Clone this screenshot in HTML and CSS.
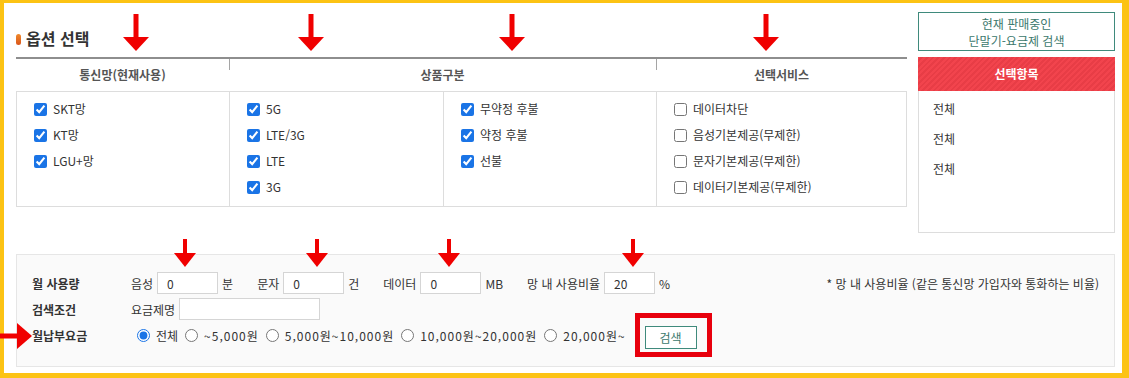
FILE: index.html
```html
<!DOCTYPE html>
<html lang="ko">
<head>
    <meta charset="UTF-8">
    <meta name="viewport" content="width=device-width, initial-scale=1.0">
    <title>옵션 선택</title>
    <link rel="stylesheet" href="styles.css">
</head>
<body>
    <div class="frame">
        <div class="top">
            <div class="options">
                <h2 class="title"><span class="dot"></span>옵션 선택</h2>
                <div class="opt-head">
                    <div class="hcell h1">통신망(현재사용)</div>
                    <div class="hcell h2">상품구분</div>
                    <div class="hcell h3">선택서비스</div>
                </div>
                <div class="opt-body">
                    <div class="col">
                        <label class="chk"><input type="checkbox" checked>SKT망</label>
                        <label class="chk"><input type="checkbox" checked>KT망</label>
                        <label class="chk"><input type="checkbox" checked>LGU+망</label>
                    </div>
                    <div class="col">
                        <label class="chk"><input type="checkbox" checked>5G</label>
                        <label class="chk"><input type="checkbox" checked>LTE/3G</label>
                        <label class="chk"><input type="checkbox" checked>LTE</label>
                        <label class="chk"><input type="checkbox" checked>3G</label>
                    </div>
                    <div class="col">
                        <label class="chk"><input type="checkbox" checked>무약정 후불</label>
                        <label class="chk"><input type="checkbox" checked>약정 후불</label>
                        <label class="chk"><input type="checkbox" checked>선불</label>
                    </div>
                    <div class="col">
                        <label class="chk"><input type="checkbox">데이터차단</label>
                        <label class="chk"><input type="checkbox">음성기본제공(무제한)</label>
                        <label class="chk"><input type="checkbox">문자기본제공(무제한)</label>
                        <label class="chk"><input type="checkbox">데이터기본제공(무제한)</label>
                    </div>
                </div>
            </div>
            <div class="side">
                <a class="side-btn" href="#">현재 판매중인<br>단말기-요금제 검색</a>
                <div class="side-head">선택항목</div>
                <ul class="side-list">
                    <li>전체</li>
                    <li>전체</li>
                    <li>전체</li>
                </ul>
            </div>
        </div>

        <div class="search">
            <div class="row">
                <span class="rlabel">월 사용량</span>
                <span class="fld">음성<input type="text" class="num" value="0">분</span>
                <span class="fld">문자<input type="text" class="num" value="0">건</span>
                <span class="fld">데이터<input type="text" class="num" value="0">MB</span>
                <span class="fld">망 내 사용비율<input type="text" class="num small" value="20">%</span>
                <span class="note">* 망 내 사용비율 (같은 통신망 가입자와 통화하는 비율)</span>
            </div>
            <div class="row">
                <span class="rlabel">검색조건</span>
                <span class="fld">요금제명<input type="text" class="name"></span>
            </div>
            <div class="row">
                <span class="rlabel">월납부요금</span>
                <label class="rad first"><input type="radio" name="fee" checked>전체</label>
                <label class="rad"><input type="radio" name="fee">~5,000원</label>
                <label class="rad"><input type="radio" name="fee">5,000원~10,000원</label>
                <label class="rad"><input type="radio" name="fee">10,000원~20,000원</label>
                <label class="rad"><input type="radio" name="fee">20,000원~</label>
                <span class="mark"><button class="btn-search">검색</button></span>
            </div>
        </div>

        <!-- annotation arrows -->
        <svg class="arrow a1" width="26" height="38" viewBox="0 0 26 38"><rect x="10.5" y="0" width="5" height="24"/><polygon points="0,23 26,23 13,37"/></svg>
        <svg class="arrow a2" width="26" height="38" viewBox="0 0 26 38"><rect x="10.5" y="0" width="5" height="24"/><polygon points="0,23 26,23 13,37"/></svg>
        <svg class="arrow a3" width="26" height="38" viewBox="0 0 26 38"><rect x="10.5" y="0" width="5" height="24"/><polygon points="0,23 26,23 13,37"/></svg>
        <svg class="arrow a4" width="26" height="38" viewBox="0 0 26 38"><rect x="10.5" y="0" width="5" height="24"/><polygon points="0,23 26,23 13,37"/></svg>
        <svg class="arrow b1" width="22" height="28" viewBox="0 0 22 28"><rect x="9" y="0" width="4" height="15"/><polygon points="0,14 22,14 11,28"/></svg>
        <svg class="arrow b2" width="22" height="28" viewBox="0 0 22 28"><rect x="9" y="0" width="4" height="15"/><polygon points="0,14 22,14 11,28"/></svg>
        <svg class="arrow b3" width="22" height="28" viewBox="0 0 22 28"><rect x="9" y="0" width="4" height="15"/><polygon points="0,14 22,14 11,28"/></svg>
        <svg class="arrow b4" width="22" height="28" viewBox="0 0 22 28"><rect x="9" y="0" width="4" height="15"/><polygon points="0,14 22,14 11,28"/></svg>
        <svg class="arrow left" width="32" height="26" viewBox="0 0 32 26"><rect x="0" y="10.5" width="18" height="5"/><polygon points="17,0 32,13 17,26"/></svg>
    </div>
</body>
</html>
```

FILE: styles.css
```css
* {
    box-sizing: border-box;
}
body {
    margin: 0;
    font-family: "Noto Sans CJK KR", "Noto Sans", sans-serif;
    font-size: 12px;
    color: #333;
    background: #fff;
}
.frame {
    position: relative;
    width: 1129px;
    height: 378px;
    border-style: solid;
    border-color: #fcc314;
    border-width: 3px 7px 5px 4px;
    padding: 9px 7px 0 12px;
}

/* top area */
.top {
    display: flex;
    gap: 11px;
    height: 221px;
}
.options {
    width: 891px;
}
.title {
    display: flex;
    align-items: center;
    height: 45px;
    margin: 0;
    padding-top: 6px;
    font-size: 16px;
    font-weight: bold;
    color: #333;
    line-height: 20px;
}
.dot {
    width: 5px;
    height: 11px;
    margin: 4px 5px 0 0;
    border-radius: 3px;
    background: linear-gradient(#f08a2c, #d9541a);
}
.opt-head {
    display: grid;
    grid-template-columns: 213px 427px 1fr;
    height: 35px;
    border-top: 2px solid #8e8e8e;
    border-bottom: 1px solid #ddd;
}
.hcell {
    display: flex;
    align-items: center;
    justify-content: center;
    font-weight: bold;
    color: #555;
    line-height: 16px;
}
.h2, .h3 {
    background: linear-gradient(#a5a5a5, #a5a5a5) left top / 1px 11px no-repeat;
}
.opt-body {
    display: grid;
    grid-template-columns: 213px 214px 213px 1fr;
    height: 115px;
    border-right: 1px solid #ddd;
    border-bottom: 1px solid #ddd;
}
.col {
    border-left: 1px solid #ddd;
    padding: 4px 0 0 17px;
}
.chk {
    display: flex;
    align-items: center;
    gap: 6px;
    height: 26px;
    line-height: 16px;
}
.chk input {
    width: 13px;
    height: 13px;
    margin: 0;
    accent-color: #1a74e6;
}

/* right panel */
.side {
    width: 197px;
}
.side-btn {
    display: flex;
    align-items: center;
    justify-content: center;
    height: 39px;
    border: 1px solid #3f8a7c;
    color: #3b786c;
    text-align: center;
    text-decoration: none;
    line-height: 17px;
}
.side-head {
    margin-top: 6px;
    height: 34px;
    line-height: 34px;
    text-align: center;
    font-weight: bold;
    color: #fff;
    background: repeating-linear-gradient(135deg, #f2444d 0 2px, #e83d46 2px 4px);
}
.side-list {
    list-style: none;
    margin: 0;
    height: 142px;
    padding: 3px 14px;
    border: 1px solid #ddd;
    border-top: none;
}
.side-list li {
    line-height: 30px;
}

/* search panel */
.search {
    margin-top: 21px;
    height: 113px;
    padding: 15px 15px 0;
    border: 1px solid #e6e6e6;
    background: #fafafa;
}
.row {
    display: flex;
    align-items: center;
    height: 26px;
}
.rlabel {
    width: 99px;
    font-weight: bold;
    color: #333;
}
.fld {
    display: inline-flex;
    align-items: center;
    gap: 4px;
    margin-right: 24px;
}
.num, .name {
    height: 22px;
    border: 1px solid #d5d5d5;
    background: #fff;
    font-family: inherit;
    font-size: 12px;
    color: #333;
    padding: 0 0 0 9px;
}
.num {
    width: 61px;
}
.num.small {
    width: 51px;
}
.name {
    width: 141px;
}
.note {
    margin-left: auto;
}
.rad {
    display: inline-flex;
    align-items: center;
    gap: 6px;
    margin-right: 7px;
    letter-spacing: 1px;
}
.rad.first {
    margin-left: 6px;
    letter-spacing: 0;
}
.rad input {
    width: 13px;
    height: 13px;
    margin: 0;
    accent-color: #1a74e6;
}
.mark {
    display: inline-block;
    margin: -9px 0 -9px 2px;
    padding: 8px 10px 3px 5px;
    border: 5px solid #e8000d;
}
.btn-search {
    display: block;
    width: 52px;
    height: 23px;
    border: 1px solid #3f8a7c;
    background: #fff;
    color: #3b786c;
    font-family: inherit;
    font-size: 12px;
    cursor: pointer;
}

/* annotation arrows */
.arrow {
    position: absolute;
    fill: #f00000;
}
.a1 { left: 119px; top: 11px; }
.a2 { left: 294px; top: 11px; }
.a3 { left: 495px; top: 11px; }
.a4 { left: 749px; top: 11px; }
.b1 { left: 170px; top: 236px; }
.b2 { left: 302px; top: 236px; }
.b3 { left: 434px; top: 236px; }
.b4 { left: 618px; top: 236px; }
.left { left: -4px; top: 320px; }
```
